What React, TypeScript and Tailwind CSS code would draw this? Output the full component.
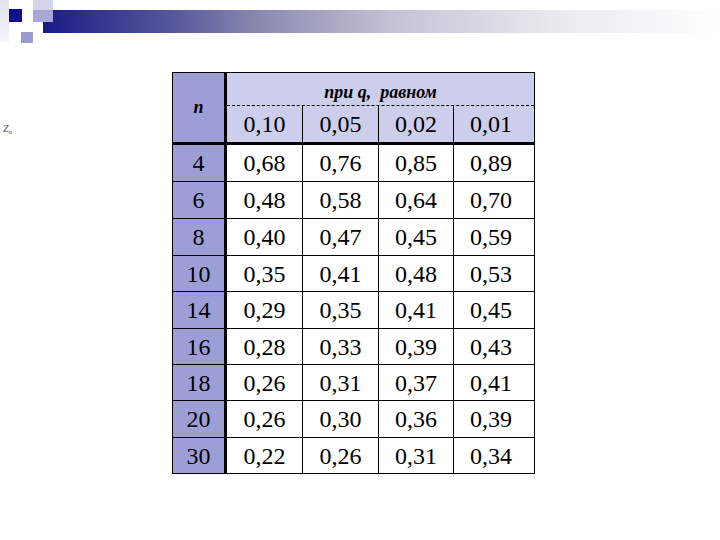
import React from "react";

const header = ["0,10", "0,05", "0,02", "0,01"];
const rows: [string, string[]][] = [
  ["4", ["0,68", "0,76", "0,85", "0,89"]],
  ["6", ["0,48", "0,58", "0,64", "0,70"]],
  ["8", ["0,40", "0,47", "0,45", "0,59"]],
  ["10", ["0,35", "0,41", "0,48", "0,53"]],
  ["14", ["0,29", "0,35", "0,41", "0,45"]],
  ["16", ["0,28", "0,33", "0,39", "0,43"]],
  ["18", ["0,26", "0,31", "0,37", "0,41"]],
  ["20", ["0,26", "0,30", "0,36", "0,39"]],
  ["30", ["0,22", "0,26", "0,31", "0,34"]],
];
// total heights including top border for rows after the first
const rowH = [36, 37, 37, 36, 37, 36, 36, 37, 36];
const colW = ["w-[75px]", "w-[76px]", "w-[75px]", "w-[75px]"];

export default function App() {
  return (
    <div className="w-[720px] h-[540px] bg-white overflow-hidden [font-family:Liberation_Serif,serif] text-black">
      {/* decoration */}
      <div className="relative h-[72px]">
        <div className="absolute left-0 top-0 w-[9px] h-[42px] bg-gradient-to-b from-[#e4e4f0] to-[#f4f4f8]" />
        <div className="absolute left-[33px] top-0 w-[20px] h-[12px] bg-[#d4d4ea]" />
        <div className="absolute left-[43px] top-[10px] w-[677px] h-[23px] bg-[linear-gradient(to_right,#1a1a86_0%,#5a5a9c_20%,#8a8ab0_32%,#c4c4d6_52%,#e8e8ee_75%,#ffffff_100%)]" />
        <div className="absolute left-[33px] top-[10px] w-[20px] h-[12px] bg-[#a8a8d6]" />
        <div className="absolute left-[9px] top-[9px] w-[13px] h-[13px] bg-[#10108c]" />
        <div className="absolute left-[21px] top-[32px] w-[12px] h-[11px] bg-[#9a9ad0]" />
      </div>

      <div className="flex items-start">
        <div className="w-[172px] pl-[3px] pt-[52px] text-[10px] italic text-[#555] leading-none">
          Z<sub className="text-[7px]">α</sub>
        </div>
        <div className="w-[363px] border border-black">
          {/* header */}
          <div className="flex h-[72px] border-b-[3px] border-black">
            <div className="w-[54px] border-r-[3px] border-black bg-[#9e9ed6] flex items-center justify-center text-[18px] font-bold italic">
              n
            </div>
            <div className="flex-1 bg-[#cdcdec] flex flex-col">
              <div className="h-[34px] flex items-end justify-center pb-[4px] text-[18px] leading-none font-bold italic border-b border-dashed border-black">
                при q,&nbsp;&nbsp;равном
              </div>
              <div className="flex flex-1">
                {header.map((h, i) => (
                  <div
                    key={h}
                    className={`${colW[i]} ${i > 0 ? "border-l border-black" : ""} flex items-center justify-center text-[24px]`}
                  >
                    {h}
                  </div>
                ))}
              </div>
            </div>
          </div>
          {/* data */}
          {rows.map(([n, vals], r) => (
            <div
              key={n}
              className={`flex ${r > 0 ? "border-t border-black" : ""}`}
              style={{ height: rowH[r] }}
            >
              <div className="w-[54px] border-r-[3px] border-black bg-[#9e9ed6] flex items-center justify-center text-[24px]">
                {n}
              </div>
              {vals.map((v, i) => (
                <div
                  key={i}
                  className={`${colW[i]} ${i > 0 ? "border-l border-black" : ""} flex items-center justify-center text-[24px]`}
                >
                  {v}
                </div>
              ))}
            </div>
          ))}
        </div>
      </div>
    </div>
  );
}
